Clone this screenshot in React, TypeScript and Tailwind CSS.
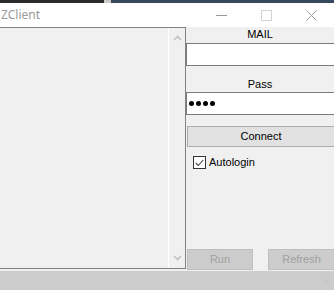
import React from 'react';

const ui = { fontFamily: '"Liberation Sans", Arial, sans-serif' };

function Chevron({ dir, className }: { dir: 'up' | 'down'; className?: string }) {
  return (
    <svg width="9" height="6" viewBox="0 0 9 6" className={className}>
      <path
        d={dir === 'up' ? 'M1 5 L4.5 1.5 L8 5' : 'M1 1 L4.5 4.5 L8 1'}
        fill="none"
        stroke="#c2c2c2"
        strokeWidth="1.6"
      />
    </svg>
  );
}

export default function App() {
  return (
    <div className="w-[334px] h-[290px] overflow-hidden flex flex-col bg-[#f0f0f0] text-[11px] text-black" style={ui}>
      {/* strip of the window behind */}
      <div className="h-[3px] flex shrink-0">
        <div className="w-[104px] bg-[#2b2b2b]" />
        <div className="w-[7px] bg-[#c9c9c9]" />
        <div className="flex-1 bg-[#37475c]" />
      </div>

      {/* title bar */}
      <div className="h-[24px] shrink-0 bg-white flex items-center">
        <span className="pl-[1px] text-[12px] text-[#9a9a9a] flex-1" style={{ fontFamily: '"Noto Sans", "Open Sans", sans-serif' }}>
          ZClient
        </span>
        <div className="flex items-center">
          <div className="w-[45px] h-[24px] flex items-center justify-center">
            <svg width="11" height="11" viewBox="0 0 11 11">
              <path d="M0 5.5 H11" stroke="#9a9a9a" strokeWidth="1" />
            </svg>
          </div>
          <div className="w-[45px] h-[24px] flex items-center justify-center">
            <svg width="11" height="11" viewBox="0 0 11 11">
              <rect x="0.5" y="0.5" width="10" height="10" fill="none" stroke="#d4d4d4" />
            </svg>
          </div>
          <div className="w-[45px] h-[24px] flex items-center justify-center">
            <svg width="11" height="11" viewBox="0 0 11 11">
              <path d="M0.5 0.5 L10.5 10.5 M10.5 0.5 L0.5 10.5" stroke="#9a9a9a" strokeWidth="1" />
            </svg>
          </div>
        </div>
      </div>

      {/* client area */}
      <div className="h-[244px] shrink-0 flex">
        {/* list box */}
        <div className="w-[186px] h-[242px] shrink-0 flex border-t border-r border-b border-[#828282]">
          <div className="flex-1 bg-[#f0f0f0]" />
          <div className="w-[17px] border-l border-white flex flex-col items-center justify-between py-[7px]">
            <Chevron dir="up" />
            <Chevron dir="down" />
          </div>
        </div>

        {/* right panel */}
        <div className="flex-1 flex flex-col">
          <div className="h-[14px] leading-[14px] text-center">MAIL</div>
          <div className="mt-[2px] h-[23px] bg-white border-t border-l border-b border-[#7a7a7a]" />
          <div className="mt-[11px] h-[14px] leading-[14px] text-center">Pass</div>
          <div className="mt-[1px] h-[23px] bg-white border-t border-l border-b border-[#7a7a7a] flex items-center pl-[2px] gap-[2px]">
            {[0, 1, 2, 3].map((i) => (
              <span key={i} className="w-[5px] h-[5px] rounded-full bg-black" />
            ))}
          </div>
          <div className="mt-[11px] ml-[1px] h-[21px] bg-[#e1e1e1] border-t border-l border-b border-[#adadad] flex items-center justify-center">
            Connect
          </div>
          <div className="mt-[9px] ml-[7px] flex items-center gap-[3px]">
            <div className="w-[13px] h-[13px] border border-[#333] bg-white flex items-center justify-center">
              <svg width="9" height="8" viewBox="0 0 9 8">
                <path d="M0.8 4 L3.3 6.5 L8.2 1" fill="none" stroke="#444" strokeWidth="1.1" />
              </svg>
            </div>
            <span className="leading-[13px]">Autologin</span>
          </div>
          <div className="mt-auto mb-[1px] ml-[1px] flex items-center justify-between">
            <div className="w-[66px] h-[21px] bg-[#cccccc] border border-[#bfbfbf] text-[#a0a0a0] flex items-center justify-center">
              Run
            </div>
            <div className="w-[66px] h-[21px] bg-[#cccccc] border-t border-l border-b border-[#bfbfbf] text-[#a0a0a0] flex items-center justify-center">
              Refresh
            </div>
          </div>
        </div>
      </div>

      {/* bottom bar */}
      <div className="flex-1 bg-[#cccccc] flex items-center justify-end pr-[3px]">
        <Chevron dir="down" className="opacity-80" />
      </div>
    </div>
  );
}
